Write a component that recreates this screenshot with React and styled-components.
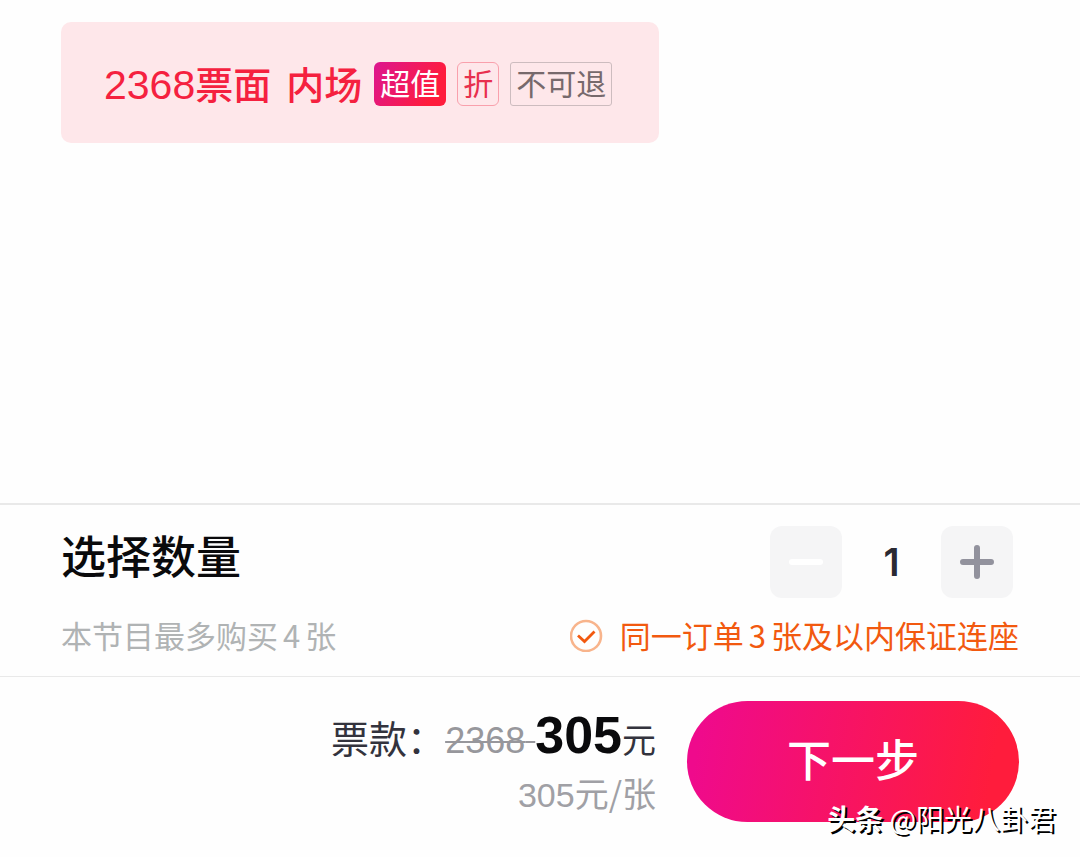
import React, { useState } from "react";
import styled, { createGlobalStyle } from "styled-components";

const MAX_COUNT = 4;
const PRICE = 305;
const FACE_PRICE = 2368;

const App = () => {
  const [count, setCount] = useState(1);

  const handleChange = (e) => {
    const value = Number(e.target.value) || 1;
    setCount(Math.min(MAX_COUNT, Math.max(1, value)));
  };

  return (
    <>
      <GlobalStyle />
      <Page>
        <TicketArea>
          <TicketCard type="button">
            <TicketName>
              <span>
                <TicketDigits>{FACE_PRICE}</TicketDigits>票面
              </span>
              <span>内场</span>
            </TicketName>
            <Tags>
              <Tag $kind="value">超值</Tag>
              <Tag $kind="discount">折</Tag>
              <Tag $kind="plain">不可退</Tag>
            </Tags>
          </TicketCard>
        </TicketArea>

        <CountPanel>
          <CountRow>
            <Title htmlFor="count">选择数量</Title>
            <Stepper>
              <StepButton
                type="button"
                aria-label="减少"
                disabled={count <= 1}
                onClick={() => setCount(count - 1)}
              >
                <svg width="36" height="36" viewBox="0 0 36 36">
                  <path d="M4 18H32" />
                </svg>
              </StepButton>
              <CountInput
                id="count"
                type="text"
                inputMode="numeric"
                value={count}
                onChange={handleChange}
              />
              <StepButton
                type="button"
                aria-label="增加"
                disabled={count >= MAX_COUNT}
                onClick={() => setCount(count + 1)}
              >
                <svg width="36" height="36" viewBox="0 0 36 36">
                  <path d="M4 18H32M18 4V32" />
                </svg>
              </StepButton>
            </Stepper>
          </CountRow>
          <NoteRow>
            <Note>
              本节目最多购买<NoteDigit>4</NoteDigit>张
            </Note>
            <SeatNote>
              <svg width="34" height="34" viewBox="0 0 34 34" fill="none">
                <circle cx="16" cy="18" r="15" stroke="#f8b48c" strokeWidth="2.6" />
                <path
                  d="M8 17.5L14.5 23.5L24.5 13.5"
                  stroke="#f2590f"
                  strokeWidth="2.8"
                />
              </svg>
              <span>
                同一订单<NoteDigit>3</NoteDigit>张及以内保证连座
              </span>
            </SeatNote>
          </NoteRow>
        </CountPanel>

        <Footer>
          <Prices>
            <PriceLine>
              <PriceLabel>票款：</PriceLabel>
              <OldPrice>{FACE_PRICE} </OldPrice>
              <Total>{PRICE * count}</Total>
              <Unit>元</Unit>
            </PriceLine>
            <UnitPrice>
              <UnitDigits>{PRICE}</UnitDigits>元/张
            </UnitPrice>
          </Prices>
          <NextButton type="button">下一步</NextButton>
          <Watermark>
            <b>头条</b> @阳光八卦君
          </Watermark>
        </Footer>
      </Page>
    </>
  );
};

export default App;

const GlobalStyle = createGlobalStyle`
  * {
    box-sizing: border-box;
  }

  body {
    margin: 0;
    background: #fefefe;
    font-family: "Noto Sans CJK SC", sans-serif;
  }

  button,
  input {
    border: none;
    font-family: inherit;
  }

  button {
    cursor: pointer;
  }
`;

const Page = styled.main`
  display: flex;
  flex-direction: column;
  min-height: 100vh;
`;

const TicketArea = styled.section`
  flex: 1;
  padding: 22px 61px;
`;

const TicketCard = styled.button`
  display: inline-flex;
  align-items: center;
  gap: 12px;
  padding: 40px 47px 37px 43px;
  border-radius: 10px;
  background: #fee7ea;
`;

const TicketName = styled.span`
  display: flex;
  align-items: baseline;
  gap: 15px;
  color: #f5213f;
  font-size: 38px;
  font-weight: 500;
  line-height: 40px;
`;

const TicketDigits = styled.span`
  font-family: "Liberation Sans", sans-serif;
  font-size: 41px;
`;

const Tags = styled.span`
  display: flex;
  gap: 11px;
`;

const tagStyles = {
  value: `
    background: linear-gradient(120deg, #dc1690, #ff1c3c 80%);
    border-color: transparent;
    background-origin: border-box;
    color: #fff;
  `,
  discount: `
    border-color: #f9a0ac;
    color: #e8304e;
  `,
  plain: `
    border-color: #cdbcbf;
    border-radius: 3px;
    color: #77696c;
  `,
};

const Tag = styled.span`
  padding: 0 5px 4px;
  border: 1px solid;
  border-radius: 6px;
  font-size: 30px;
  line-height: 38px;
  ${({ $kind }) => tagStyles[$kind]}
`;

const CountPanel = styled.section`
  padding: 21px 61px 17px;
  border-top: 2px solid #e9e9e9;
`;

const CountRow = styled.div`
  display: flex;
  justify-content: space-between;
  align-items: flex-start;
`;

const Title = styled.label`
  color: #0a0a0c;
  font-size: 45px;
  font-weight: 500;
  line-height: 58px;
`;

const Stepper = styled.div`
  display: flex;
  align-items: center;
  padding-right: 6px;
`;

const StepButton = styled.button`
  display: flex;
  align-items: center;
  justify-content: center;
  width: 72px;
  height: 72px;
  border-radius: 12px;
  background: #f5f5f6;

  path {
    stroke: #92929d;
    stroke-width: 6;
    stroke-linecap: round;
  }

  &:disabled {
    cursor: default;

    path {
      stroke: #fff;
    }
  }
`;

const CountInput = styled.input`
  width: 99px;
  padding: 0;
  background: transparent;
  color: #2a2a33;
  font-family: Inter, sans-serif;
  font-size: 38px;
  font-weight: 600;
  text-align: center;
`;

const NoteRow = styled.div`
  display: flex;
  justify-content: space-between;
  align-items: center;
  margin-top: 13px;
  font-size: 31px;
  line-height: 48px;
`;

const Note = styled.span`
  color: #b0b3b4;
`;

const NoteDigit = styled.span`
  margin: 0 5px;
`;

const SeatNote = styled.span`
  display: flex;
  align-items: center;
  gap: 16px;
  color: #f2590f;
`;

const Footer = styled.footer`
  position: relative;
  display: flex;
  justify-content: flex-end;
  align-items: flex-start;
  gap: 31px;
  padding: 24px 61px 35px;
  border-top: 1px solid #e9e9e9;
`;

const Prices = styled.div`
  text-align: right;
`;

const PriceLine = styled.div`
  display: flex;
  align-items: baseline;
  justify-content: flex-end;
  color: #33333d;
  line-height: 68px;
`;

const PriceLabel = styled.span`
  font-size: 38px;
`;

const OldPrice = styled.s`
  color: #97979c;
  font-family: "Liberation Sans", sans-serif;
  font-size: 36px;
  text-decoration-thickness: 2px;
  white-space: pre;
`;

const Total = styled.strong`
  color: #0a0a0c;
  font-family: "Liberation Sans", sans-serif;
  font-size: 52px;
`;

const Unit = styled.span`
  font-size: 34px;
`;

const UnitPrice = styled.div`
  color: #a0a0a5;
  font-size: 34px;
  line-height: 36px;
`;

const UnitDigits = styled.span`
  font-family: "Liberation Sans", sans-serif;
`;

const NextButton = styled.button`
  padding: 0 100px 6px;
  border-radius: 61px;
  background: linear-gradient(100deg, #ef0a8c 5%, #ff1c3c 90%);
  color: #fff;
  font-size: 44px;
  font-weight: 500;
  line-height: 115px;
`;

const Watermark = styled.span`
  position: absolute;
  right: 24px;
  bottom: 19px;
  color: #fff;
  font-size: 28px;
  line-height: 40px;
  text-shadow: 2px 2px 0 #000;
`;
